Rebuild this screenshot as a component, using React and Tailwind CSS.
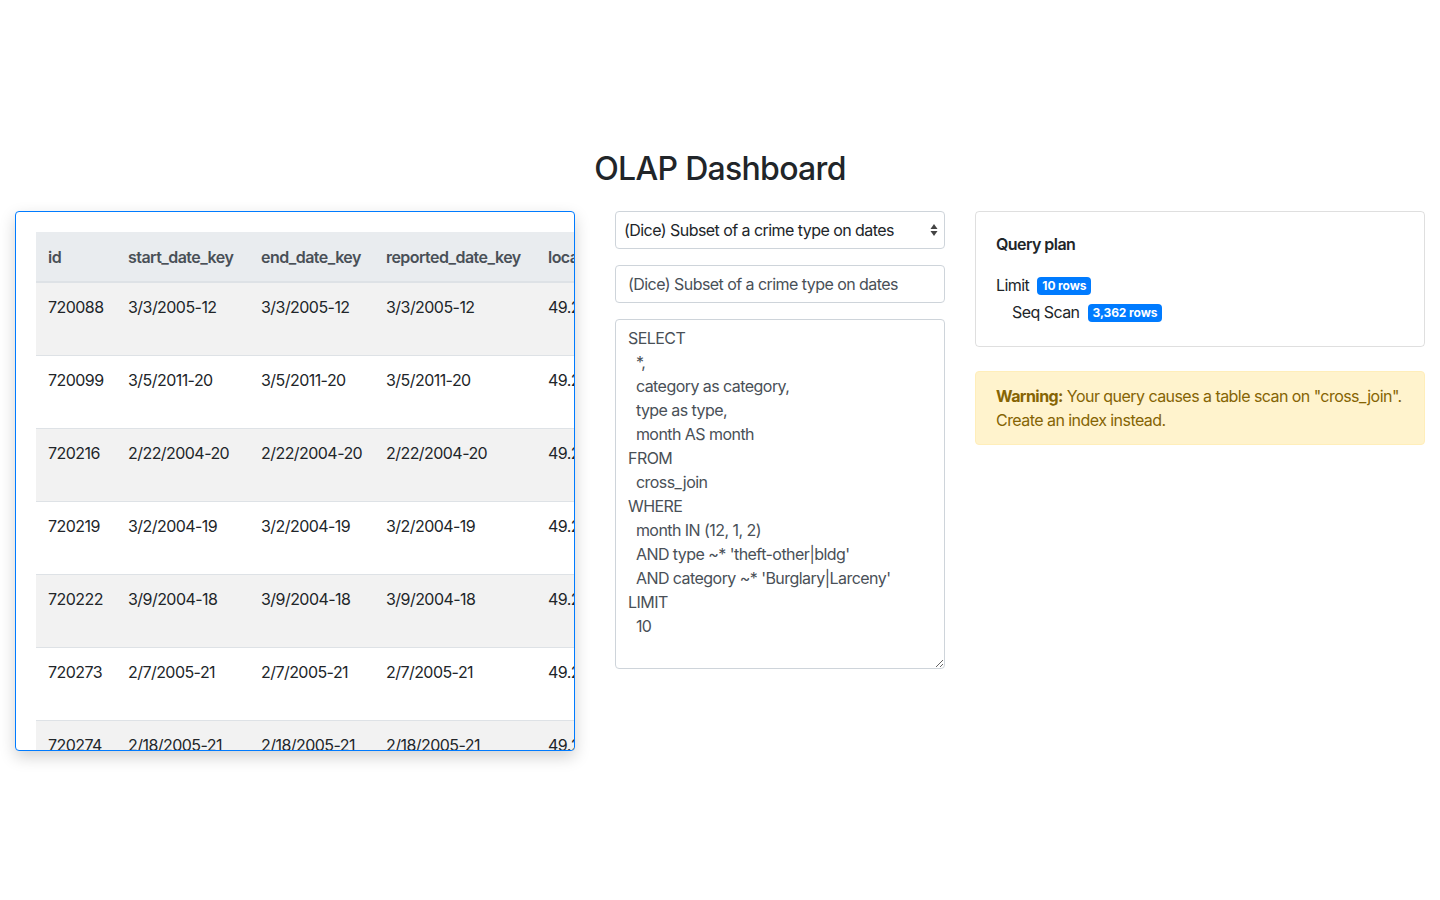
const rows = [
  ['720088', '3/3/2005-12', '3/3/2005-12', '3/3/2005-12', '49.2612', 'Burglary'],
  ['720099', '3/5/2011-20', '3/5/2011-20', '3/5/2011-20', '49.2497', 'Larceny'],
  ['720216', '2/22/2004-20', '2/22/2004-20', '2/22/2004-20', '49.2733', 'Burglary'],
  ['720219', '3/2/2004-19', '3/2/2004-19', '3/2/2004-19', '49.2804', 'Larceny'],
  ['720222', '3/9/2004-18', '3/9/2004-18', '3/9/2004-18', '49.2381', 'Burglary'],
  ['720273', '2/7/2005-21', '2/7/2005-21', '2/7/2005-21', '49.2290', 'Larceny'],
  ['720274', '2/18/2005-21', '2/18/2005-21', '2/18/2005-21', '49.2655', 'Burglary'],
  ['720301', '1/12/2005-09', '1/12/2005-09', '1/12/2005-09', '49.2567', 'Larceny'],
];

const sql = `SELECT
  *,
  category as category,
  type as type,
  month AS month
FROM
  cross_join
WHERE
  month IN (12, 1, 2)
  AND type ~* 'theft-other|bldg'
  AND category ~* 'Burglary|Larceny'
LIMIT
  10`;

const Badge = ({ children }) => (
  <span className="inline-block ml-2 px-[5px] py-[3px] rounded bg-[#007bff] text-white text-[12px] font-bold leading-none tracking-[-0.1px] align-[1px]">
    {children}
  </span>
);

export default function App() {
  return (
    <div className="min-h-screen w-full bg-white text-[#212529] pt-[150px] tracking-[-0.55px]" style={{ fontFamily: 'Inter, "Liberation Sans", sans-serif' }}>
      <h2 className="text-center text-[32px] font-medium leading-[38px] mb-[23px] tracking-[-0.7px]">OLAP Dashboard</h2>

      <div className="flex items-start px-[15px] gap-[40px]">
        {/* tabla */}
        <div className="w-[560px] h-[540px] shrink-0 border border-[#007bff] rounded bg-white shadow-[0_6px_16px_rgba(0,0,0,0.18)] overflow-hidden pl-[20px] pt-[20px]">
          <table className="table-fixed w-[900px] text-[16px] leading-6 border-collapse">
            <thead>
              <tr className="bg-[#e9ecef] text-[#495057]">
                <th className="w-[80px] h-[50px] text-left font-semibold px-3 py-3 border-b-2 border-[#dee2e6]">id</th>
                <th className="w-[133px] text-left font-semibold px-3 py-3 border-b-2 border-[#dee2e6]">start_date_key</th>
                <th className="w-[125px] text-left font-semibold px-3 py-3 border-b-2 border-[#dee2e6]">end_date_key</th>
                <th className="w-[162px] text-left font-semibold px-3 py-3 border-b-2 border-[#dee2e6]">reported_date_key</th>
                <th className="w-[110px] text-left font-semibold px-3 py-3 border-b-2 border-[#dee2e6]">location</th>
                <th className="w-[290px] text-left font-semibold px-3 py-3 border-b-2 border-[#dee2e6]">category</th>
              </tr>
            </thead>
            <tbody>
              {rows.map((r, i) => (
                <tr key={r[0]} className={i % 2 === 0 ? 'bg-[#f2f2f2]' : 'bg-white'}>
                  {r.map((c, j) => (
                    <td key={j} className="h-[73px] align-top px-3 pt-3 pb-3 border-t border-[#dee2e6] whitespace-nowrap">
                      {c}
                    </td>
                  ))}
                </tr>
              ))}
            </tbody>
          </table>
        </div>

        {/* consulta */}
        <div className="w-[330px] shrink-0 flex flex-col gap-4 text-[16px]">
          <div className="relative h-[38px] border border-[#ced4da] rounded bg-white flex items-center pl-2 pr-6">
            <span className="leading-6">(Dice) Subset of a crime type on dates</span>
            <svg className="absolute right-[6px] top-1/2 -translate-y-1/2" width="8" height="14" viewBox="0 0 8 14">
              <path d="M4 1 L7.5 6 L0.5 6 Z" fill="#444" />
              <path d="M4 13 L7.5 8 L0.5 8 Z" fill="#444" />
            </svg>
          </div>
          <input
            type="text"
            defaultValue="(Dice) Subset of a crime type on dates"
            className="h-[38px] border border-[#ced4da] rounded px-3 py-1.5 text-[16px] leading-6 text-[#495057] outline-none"
          />
          <textarea
            defaultValue={sql}
            className="h-[350px] border border-[#ced4da] rounded px-3 py-1.5 text-[16px] leading-6 text-[#495057] outline-none resize-y"
          />
        </div>

        {/* plan */}
        <div className="flex-1 flex flex-col gap-6 ml-[-10px]">
          <div className="border border-[rgba(0,0,0,0.125)] rounded p-5 pb-[20px]">
            <h5 className="text-[16px] font-semibold leading-6 mb-[16px]">Query plan</h5>
            <div className="leading-[27px] text-[16px]">
              <div>
                Limit<Badge>10 rows</Badge>
              </div>
              <div className="pl-4">
                Seq Scan<Badge>3,362 rows</Badge>
              </div>
            </div>
          </div>
          <div className="border border-[#ffeeba] bg-[#fff3cd] text-[#856404] rounded pl-5 pr-3 py-3 leading-6 text-[16px]">
            <strong className="font-bold">Warning:</strong> Your query causes a table scan on "cross_join". Create an index instead.
          </div>
        </div>
      </div>
    </div>
  );
}
